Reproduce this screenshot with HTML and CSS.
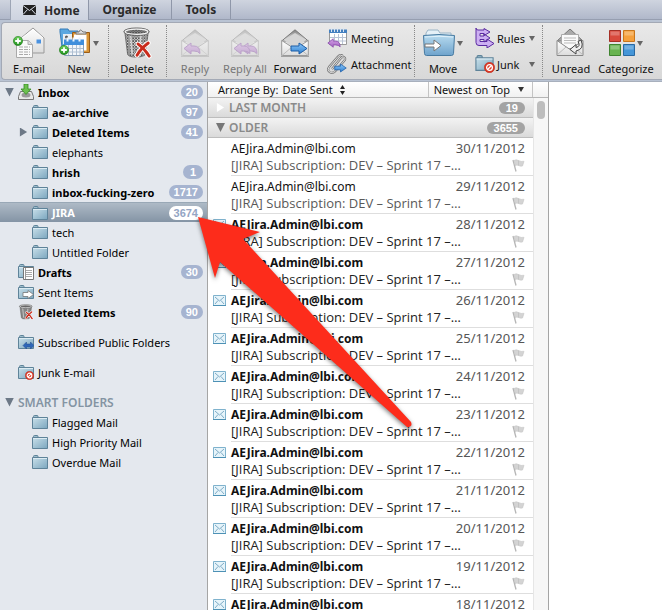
FILE: index.html
```html
<!DOCTYPE html>
<html lang="en">
<head>
<meta charset="utf-8">
<title>Mail</title>
<link rel="stylesheet" href="styles.css">
</head>
<body>
<svg class="defs" aria-hidden="true">
  <defs>
    <linearGradient id="g-folder" x1="0" y1="0" x2="1" y2="1"><stop offset="0" stop-color="#c9e0ea"/><stop offset="1" stop-color="#7ba6be"/></linearGradient>
    <linearGradient id="g-move" x1="0" y1="0" x2="0" y2="1"><stop offset="0" stop-color="#b9dcf0"/><stop offset="1" stop-color="#6fa3cc"/></linearGradient>
    <linearGradient id="g-paper" x1="0" y1="0" x2="0" y2="1"><stop offset="0" stop-color="#ffffff"/><stop offset="1" stop-color="#dcdcdc"/></linearGradient>
    <linearGradient id="g-blue" x1="0" y1="0" x2="0" y2="1"><stop offset="0" stop-color="#8cc8fa"/><stop offset="1" stop-color="#2f7fd0"/></linearGradient>
    <linearGradient id="g-purple" x1="0" y1="0" x2="0" y2="1"><stop offset="0" stop-color="#d9a6ea"/><stop offset="1" stop-color="#a062c0"/></linearGradient>
    <linearGradient id="g-lid" x1="0" y1="0" x2="0" y2="1"><stop offset="0" stop-color="#7e7e7e"/><stop offset="1" stop-color="#e8e8e8"/></linearGradient>
    <linearGradient id="g-green" x1="0" y1="0" x2="0" y2="1"><stop offset="0" stop-color="#6fd25c"/><stop offset="1" stop-color="#1f8f1c"/></linearGradient>
    <pattern id="mesh" width="3" height="3" patternUnits="userSpaceOnUse"><path d="M0 0L3 3M3 0L0 3" stroke="#4c4c4c" stroke-width=".9"/></pattern>
    <symbol id="folder" viewBox="0 0 16 14">
      <path d="M1.500 3.500V1.500q0-1 1-1h2.500q1 0 1 1V3.500" fill="#9dbdcc" stroke="#5e8399"/>
      <path d="M.5 2.500h15v11H.5z" fill="url(#g-folder)" stroke="#5e8399"/>
      <path d="M1 3.500h14" stroke="#dcebf2"/>
    </symbol>
    <symbol id="nosign" viewBox="0 0 10 10">
      <circle cx="5" cy="5" r="4.700" fill="#dc3a27" stroke="#b92b1c" stroke-width=".5"/>
      <circle cx="5" cy="5" r="2.600" fill="none" stroke="#fff" stroke-width="1.200"/><path d="M3.200 6.800L6.800 3.200" stroke="#fff" stroke-width="1.200"/>
    </symbol>
    <symbol id="plus" viewBox="0 0 10 10">
      <circle cx="5" cy="5" r="4.600" fill="url(#g-green)" stroke="#1c7a1a" stroke-width=".6"/><path d="M5 2.200v5.600M2.200 5h5.600" stroke="#fff" stroke-width="1.800"/>
    </symbol>
    <symbol id="bin" viewBox="0 0 32 34">
      <path d="M3 5L6 29q1 3 9 3t10-3l3-24z" fill="#d9d9d9" stroke="#777"/>
      <path d="M3 5L6 29q1 3 9 3t10-3l3-24z" fill="url(#mesh)"/>
      <path d="M9 9l2 20M20 9l-1 20" stroke="#f4f4f4" stroke-width="2" opacity=".6"/>
      <ellipse cx="15.500" cy="5" rx="13.500" ry="4" fill="#8e8e8e" stroke="#666"/>
      <ellipse cx="15.500" cy="5" rx="12" ry="2.800" fill="url(#mesh)" stroke="#f2f2f2" stroke-width="1.200"/>
      <path d="M17 18q7 5 12 13M28 17q-8 6-12 13" fill="none" stroke="#fff" stroke-width="5" stroke-linecap="round"/>
      <path d="M17 18q7 5 12 13M28 17q-8 6-12 13" fill="none" stroke="#c92c1c" stroke-width="3" stroke-linecap="round"/>
    </symbol>
    <symbol id="letter" viewBox="0 0 28 28">
      <path d="M.7 12L14 .8 27.300 12z" fill="url(#g-lid)" stroke="#777"/>
      <path d="M.7 11.500v15h26.600v-15L14 21.500z" fill="url(#g-paper)"/>
      <path d="M3 11L14 4l11 7-11 9z" fill="#d5d5d5"/>
      <path d="M.7 11.500v15h26.600v-15L14 20z" fill="url(#g-paper)" stroke="#999"/>
      <path d="M1 26.500L11 18M27 26.500L17 18" stroke="#bbb"/>
      <path d="M0 27.500h28" stroke="#666" opacity=".5"/>
    </symbol>
    <symbol id="arrow-right" viewBox="0 0 18 13"><path d="M1 4h8V1l8 5.500-8 5.500V9H1z" fill="url(#g-blue)" stroke="#1b5ca6" stroke-linejoin="round"/></symbol>
    <symbol id="arrow-back" viewBox="0 0 18 13"><path d="M1 6.500L8 1v3h3q6 0 6 7.500Q15 9 11 9H8v3z" fill="url(#g-purple)" stroke="#8547a8" stroke-linejoin="round"/></symbol>
    <symbol id="mail" viewBox="0 0 13 11">
      <path d="M.5.5h12v10H.5z" fill="#e6f4fa" stroke="#7fb2cd"/><path d="M0 10.500h13" stroke="#4d91b5"/>
      <path d="M2 2l4.500 4L11 2M2 9l3-3.500M11 9L8 5.500" fill="none" stroke="#7eabc6"/>
    </symbol>
    <symbol id="flag" viewBox="0 0 13 13">
      <path d="M1 1l3 11.500" stroke="#b5b5b5" stroke-width="1.300"/><path d="M2 1.500q2-1.500 4.500 0t5.500.800L10.500 7q-2 .5-4-.5t-3 .5z" fill="#d4d4d4" stroke="#c4c4c4" stroke-width=".6"/><path d="M6.500 1.500v5" stroke="#c4c4c4"/>
    </symbol>
  </defs>
</svg>

<div class="app">
  <header>
    <div class="tabs" role="tablist">
      <button class="tab active" role="tab" aria-selected="true"><svg width="13" height="10" viewBox="0 0 13 10"><path d="M0 0h13v10H0z" fill="#222"/><path d="M0 .5l6.500 5 6.500-5M0 9.500l4.500-5M13 9.500l-4.500-5" fill="none" stroke="#d8dce6"/></svg>Home</button>
      <button class="tab" role="tab">Organize</button>
      <button class="tab" role="tab">Tools</button>
    </div>
    <div class="ribbon">
      <div class="group">
        <button class="tool"><span class="pic"><svg width="32" height="32" viewBox="0 0 32 32">
          <path d="M8 11L20 1l11 10v15H8z" fill="url(#g-paper)" stroke="#999"/><path d="M9 11l11-8.500L30 11" fill="none" stroke="#fff"/><path d="M23.500 12.500h4.500v4h-4.500z" fill="#4b92e0"/>
          <path d="M3.500 13.500h12l4 4v13h-16z" fill="#fafafa" stroke="#aaa"/><path d="M6 20h11M6 22.500h11M6 25h11M6 27.500h11" stroke="#aaa" stroke-dasharray="4 1"/><path d="M15 13.500v4h4.500" fill="#ddd" stroke="#aaa"/>
          <use href="#plus" x="0" y="9" width="10" height="10"/></svg></span>E-mail</button>
        <button class="tool"><span class="pic"><svg width="32" height="32" viewBox="0 0 32 32">
          <path d="M1 5V2h8l1 2h9v23H4z" fill="#5aa7e0" stroke="#377db8"/><path d="M4 7h14v10H4z" fill="#e8eef3"/><circle cx="7.500" cy="10" r="1.500" fill="#555"/><path d="M5 15q2.500-5 5 0" fill="#555"/>
          <path d="M13.500 5.500h17v20h-17z" fill="#d99537" stroke="#9a5d18"/><path d="M15 7.500h12.500v16H15z" fill="#fff"/><path d="M17 7V5h3q1-4 4 0h3v2z" fill="#ddd" stroke="#777"/>
          <path d="M5.500 14.500h19v14h-19z" fill="#f4f7fb" stroke="#8aa0b8"/><path d="M5 12.500h20V18H5z" fill="#3f8edc"/><path d="M8.500 10.500v4M14.500 10.500v4M20.500 10.500v4" stroke="#e8f2fb" stroke-width="2"/><path d="M9.500 18v10M13.500 18v10M17.500 18v10M21 18v10M6 21.500h18M6 25h18" stroke="#aebfd2"/>
          <use href="#plus" x="0" y="18" width="10" height="10"/></svg><span class="caret"></span></span>New</button>
      </div>
      <div class="group">
        <button class="tool"><span class="pic"><svg width="32" height="32"><use href="#bin"/></svg></span>Delete</button>
      </div>
      <div class="group respond">
        <button class="tool" disabled><span class="pic"><svg width="28" height="28"><use href="#letter"/><use href="#arrow-back" x="2" y="13" width="18" height="13"/></svg></span>Reply</button>
        <button class="tool" disabled><span class="pic"><svg width="28" height="28"><use href="#letter"/><use href="#arrow-back" x="9" y="13" width="18" height="13"/><use href="#arrow-back" x="2" y="13" width="18" height="13"/></svg></span>Reply All</button>
        <button class="tool"><span class="pic"><svg width="28" height="28"><use href="#letter"/><use href="#arrow-right" x="9" y="13" width="18" height="13"/></svg></span>Forward</button>
        <div class="stack">
          <button class="mini"><svg width="20" height="20" viewBox="0 0 20 20">
            <path d="M2.500 2.500h17v14h-17z" fill="#fff" stroke="#999"/><path d="M2 1.500h18V5H2z" fill="#4480c0"/><path d="M4.500 0v4M7.500 0v4M10.500 0v4M13.500 0v4M16.500 0v4" stroke="#dbe6f2"/><path d="M7.500 6v10M11.500 6v10M15.500 6v10M3 9.500h16M3 13h16" stroke="#b8c3d4"/><use href="#arrow-back" x="0" y="10" width="14" height="10"/></svg>Meeting</button>
          <button class="mini"><svg width="20" height="20" viewBox="0 0 20 20">
            <path d="M5 15L14 4q2-2 3.500-.5T17 7L8 17.500q-3 2.500-5.500.5T2 13L11 2.500q2.500-2.500 5-.5" fill="none" stroke="#777" stroke-width="2.200"/><path d="M5 15L14 4q2-2 3.500-.5T17 7L8 17.500q-3 2.500-5.500.5T2 13L11 2.500q2.500-2.500 5-.5" fill="none" stroke="#ddd"/><use href="#arrow-right" x="7" y="9" width="13" height="10"/></svg>Attachment</button>
        </div>
      </div>
      <div class="group filing">
        <button class="tool"><span class="pic"><svg width="32" height="28" viewBox="0 0 32 28">
          <path d="M3 8V4l2-3h10l2 3h11v6z" fill="#e5f0f7" stroke="#9ab4c6"/><path d="M.5 6.500q15.500-2 31 0l-1 18q-.2 2-2 2H3.500q-1.800 0-2-2z" fill="url(#g-move)" stroke="#477aa1"/><path d="M2 8q14-1.500 28 0" fill="none" stroke="#e2f2fb"/>
          <path d="M2 15h9v-4l7 5.500-7 5.500v-4H2z" fill="#fff" stroke="#777" stroke-linejoin="round"/></svg><span class="caret"></span></span>Move</button>
        <div class="stack">
          <button class="mini"><svg width="20" height="20" viewBox="0 0 20 20">
            <path d="M1 0q0 2 2 2h6V.5L15 4 9 7.500V5.500H5V8h4V6l6 4-6 4V11.500H5v2h7V11l7 4.500-7 4.500v-2.500H4q-3 0-3-3z" fill="#cdb0f2" stroke="#5a2ba0" stroke-linejoin="round"/></svg>Rules<span class="caret"></span></button>
          <button class="mini"><svg width="20" height="18" viewBox="0 0 20 18"><use href="#folder" width="19" height="16"/><use href="#nosign" x="9" y="7" width="11" height="11"/></svg>Junk<span class="caret"></span></button>
        </div>
      </div>
      <div class="group">
        <button class="tool"><span class="pic"><svg width="30" height="28" viewBox="0 0 30 28">
          <path d="M1 12L14 0l13 12z" fill="#aaa" stroke="#777"/><path d="M5.500 5.500h17v14h-17z" fill="#fafafa" stroke="#aaa"/><path d="M8 9h12M8 11.500h12M8 14h12" stroke="#bbb"/><path d="M1 11.500l13 9 13-9v15H1z" fill="url(#g-paper)" stroke="#888"/><path d="M1 26l9-8M27 26l-9-8" stroke="#bbb"/>
          <path d="M25 11q4 9-5 11v3l-6-4.500 6-5v3q5-1 2-6z" fill="#eee" stroke="#444" stroke-linejoin="round"/></svg></span>Unread</button>
        <button class="tool wide"><span class="pic"><svg width="26" height="28" viewBox="0 0 26 28">
          <path d="M.5 1.500h11v11H.5z" fill="#d8493c" stroke="#a52f25"/><path d="M14.500 1.500h11v11h-11z" fill="#f5a03c" stroke="#c9761b"/><path d="M.5 15.500h11v11H.5z" fill="#67b34f" stroke="#3f8430"/><path d="M14.500 15.500h11v11h-11z" fill="#4596d8" stroke="#2869a3"/>
          <path d="M1.500 2.500h9v4h-9zM15.500 2.500h9v4h-9zM1.500 16.500h9v4h-9zM15.500 16.500h9v4h-9z" fill="#fff" opacity=".25"/></svg><span class="caret"></span></span>Categorize</button>
      </div>
    </div>
  </header>

  <main class="panes">
    <nav class="sidebar" aria-label="Folders">
      <a class="row strong" href="#"><span class="twist open"></span><svg width="16" height="16" viewBox="0 0 16 16"><path d="M2.500 7.500h11l2 5v3H.5v-3z" fill="#e8e8e8" stroke="#777"/><ellipse cx="8" cy="11" rx="4.500" ry="2.500" fill="#999"/><path d="M6 0h4v5h3L8 10.500 3 5h3z" fill="#6cc04e" stroke="#348a22" stroke-width=".8"/></svg><span class="name">Inbox</span><span class="count">20</span></a>
      <a class="row child strong" href="#"><span class="twist"></span><svg width="16" height="14"><use href="#folder"/></svg><span class="name">ae-archive</span><span class="count">97</span></a>
      <a class="row child strong" href="#"><span class="twist shut"></span><svg width="16" height="14"><use href="#folder"/></svg><span class="name">Deleted Items</span><span class="count">41</span></a>
      <a class="row child" href="#"><span class="twist"></span><svg width="16" height="14"><use href="#folder"/></svg><span class="name">elephants</span></a>
      <a class="row child strong" href="#"><span class="twist"></span><svg width="16" height="14"><use href="#folder"/></svg><span class="name">hrish</span><span class="count">1</span></a>
      <a class="row child strong" href="#"><span class="twist"></span><svg width="16" height="14"><use href="#folder"/></svg><span class="name">inbox-fucking-zero</span><span class="count">1717</span></a>
      <a class="row child strong selected" href="#" aria-current="true"><span class="twist"></span><svg width="16" height="14"><use href="#folder"/></svg><span class="name">JIRA</span><span class="count">3674</span></a>
      <a class="row child" href="#"><span class="twist"></span><svg width="16" height="14"><use href="#folder"/></svg><span class="name">tech</span></a>
      <a class="row child" href="#"><span class="twist"></span><svg width="16" height="14"><use href="#folder"/></svg><span class="name">Untitled Folder</span></a>
      <a class="row strong" href="#"><span class="twist"></span><svg width="16" height="16" viewBox="0 0 16 16"><use href="#folder" width="16" height="14"/><path d="M5.500 3.500h10v12h-10z" fill="#fff" stroke="#777"/><path d="M7 6.500h7M7 8.500h7M7 10.500h7M7 12.500h7" stroke="#aaa"/><path d="M7.500 4v11" stroke="#999"/></svg><span class="name">Drafts</span><span class="count">30</span></a>
      <a class="row" href="#"><span class="twist"></span><svg width="16" height="14" viewBox="0 0 16 14"><use href="#folder"/><path d="M5 7.500h5v-2l5.500 4-5.500 4v-2H5z" fill="#fff" stroke="#777" stroke-width=".8"/></svg><span class="name">Sent Items</span></a>
      <a class="row strong" href="#"><span class="twist"></span><svg width="16" height="16"><use href="#bin"/></svg><span class="name">Deleted Items</span><span class="count">90</span></a>
      <a class="row apart" href="#"><span class="twist"></span><svg width="16" height="15" viewBox="0 0 16 15"><use href="#folder" width="16" height="14"/><path d="M5 10.500l3.500-3.500v2h4V7l3.500 3.500-3.500 3.500v-2h-4v2z" fill="#2f67b8" stroke="#234d8c" stroke-width=".5"/></svg><span class="name">Subscribed Public Folders</span></a>
      <a class="row apart" href="#"><span class="twist"></span><svg width="16" height="15" viewBox="0 0 16 15"><use href="#folder" width="16" height="14"/><use href="#nosign" x="7" y="6" width="9" height="9"/></svg><span class="name">Junk E-mail</span></a>
      <button class="row apart heading" aria-expanded="true"><span class="twist open"></span><span class="name">SMART FOLDERS</span></button>
      <a class="row child" href="#"><span class="twist"></span><svg width="16" height="14"><use href="#folder"/></svg><span class="name">Flagged Mail</span></a>
      <a class="row child" href="#"><span class="twist"></span><svg width="16" height="14"><use href="#folder"/></svg><span class="name">High Priority Mail</span></a>
      <a class="row child" href="#"><span class="twist"></span><svg width="16" height="14"><use href="#folder"/></svg><span class="name">Overdue Mail</span></a>
    </nav>

    <section class="list" aria-label="Messages">
      <div class="sortbar">
        <label for="arrange">Arrange By:</label>
        <select id="arrange"><option>Date Sent</option></select>
        <svg width="5" height="10" viewBox="0 0 5 10"><path d="M0 4l2.500-4L5 4zM0 6l2.500 4L5 6z" fill="#222"/></svg>
        <button class="order">Newest on Top<span class="caret"></span></button>
      </div>
      <div class="scroller">
        <div class="messages">
          <button class="section" aria-expanded="false"><span class="twist shut"></span><span class="name">LAST MONTH</span><span class="count">19</span></button>
          <button class="section" aria-expanded="true"><span class="twist open"></span><span class="name">OLDER</span><span class="count">3655</span></button>
          <article class="message"><span class="state"></span><div class="body"><span class="from">AEJira.Admin@lbi.com</span><time>30/11/2012</time><span class="subject">[JIRA] Subscription: DEV – Sprint 17 –…</span><svg width="13" height="13"><use href="#flag"/></svg></div></article>
          <article class="message"><span class="state"></span><div class="body"><span class="from">AEJira.Admin@lbi.com</span><time>29/11/2012</time><span class="subject">[JIRA] Subscription: DEV – Sprint 17 –…</span><svg width="13" height="13"><use href="#flag"/></svg></div></article>
          <article class="message unread"><span class="state"><svg width="13" height="11"><use href="#mail"/></svg></span><div class="body"><span class="from">AEJira.Admin@lbi.com</span><time>28/11/2012</time><span class="subject">[JIRA] Subscription: DEV – Sprint 17 –…</span><svg width="13" height="13"><use href="#flag"/></svg></div></article>
          <article class="message unread"><span class="state"><svg width="13" height="11"><use href="#mail"/></svg></span><div class="body"><span class="from">AEJira.Admin@lbi.com</span><time>27/11/2012</time><span class="subject">[JIRA] Subscription: DEV – Sprint 17 –…</span><svg width="13" height="13"><use href="#flag"/></svg></div></article>
          <article class="message unread"><span class="state"><svg width="13" height="11"><use href="#mail"/></svg></span><div class="body"><span class="from">AEJira.Admin@lbi.com</span><time>26/11/2012</time><span class="subject">[JIRA] Subscription: DEV – Sprint 17 –…</span><svg width="13" height="13"><use href="#flag"/></svg></div></article>
          <article class="message unread"><span class="state"><svg width="13" height="11"><use href="#mail"/></svg></span><div class="body"><span class="from">AEJira.Admin@lbi.com</span><time>25/11/2012</time><span class="subject">[JIRA] Subscription: DEV – Sprint 17 –…</span><svg width="13" height="13"><use href="#flag"/></svg></div></article>
          <article class="message unread"><span class="state"><svg width="13" height="11"><use href="#mail"/></svg></span><div class="body"><span class="from">AEJira.Admin@lbi.com</span><time>24/11/2012</time><span class="subject">[JIRA] Subscription: DEV – Sprint 17 –…</span><svg width="13" height="13"><use href="#flag"/></svg></div></article>
          <article class="message unread"><span class="state"><svg width="13" height="11"><use href="#mail"/></svg></span><div class="body"><span class="from">AEJira.Admin@lbi.com</span><time>23/11/2012</time><span class="subject">[JIRA] Subscription: DEV – Sprint 17 –…</span><svg width="13" height="13"><use href="#flag"/></svg></div></article>
          <article class="message unread"><span class="state"><svg width="13" height="11"><use href="#mail"/></svg></span><div class="body"><span class="from">AEJira.Admin@lbi.com</span><time>22/11/2012</time><span class="subject">[JIRA] Subscription: DEV – Sprint 17 –…</span><svg width="13" height="13"><use href="#flag"/></svg></div></article>
          <article class="message unread"><span class="state"><svg width="13" height="11"><use href="#mail"/></svg></span><div class="body"><span class="from">AEJira.Admin@lbi.com</span><time>21/11/2012</time><span class="subject">[JIRA] Subscription: DEV – Sprint 17 –…</span><svg width="13" height="13"><use href="#flag"/></svg></div></article>
          <article class="message unread"><span class="state"><svg width="13" height="11"><use href="#mail"/></svg></span><div class="body"><span class="from">AEJira.Admin@lbi.com</span><time>20/11/2012</time><span class="subject">[JIRA] Subscription: DEV – Sprint 17 –…</span><svg width="13" height="13"><use href="#flag"/></svg></div></article>
          <article class="message unread"><span class="state"><svg width="13" height="11"><use href="#mail"/></svg></span><div class="body"><span class="from">AEJira.Admin@lbi.com</span><time>19/11/2012</time><span class="subject">[JIRA] Subscription: DEV – Sprint 17 –…</span><svg width="13" height="13"><use href="#flag"/></svg></div></article>
          <article class="message unread"><span class="state"><svg width="13" height="11"><use href="#mail"/></svg></span><div class="body"><span class="from">AEJira.Admin@lbi.com</span><time>18/11/2012</time></div></article>
        </div>
        <div class="track"><span class="thumb"></span></div>
      </div>
    </section>
    <section class="reader" aria-label="Reading pane"></section>
    <svg class="pointer" width="230" height="226" viewBox="0 0 230 226" aria-hidden="true"><path d="M8 7L70 22 53 29 221 212Q223 217 217 217L30 52l-5 16z" fill="#fd2c1b"/></svg>
  </main>
</div>
</body>
</html>
```
FILE: styles.css
```css
* { box-sizing: border-box; }

body {
  margin: 0;
  font-family: "Noto Sans", "Open Sans", sans-serif;
  font-size: 12px;
  color: #111;
}

button, select {
  margin: 0;
  padding: 0;
  border: 0;
  background: none;
  font: inherit;
  color: inherit;
}

a { color: inherit; text-decoration: none; }
svg { display: block; flex: none; }
.defs { position: absolute; width: 0; height: 0; }

.app {
  display: grid;
  grid-template-rows: auto 1fr;
  height: 100vh;
  overflow: hidden;
}

/* Tabs */
header { background: #b9c3d3; }

.tabs {
  display: flex;
  height: 20px;
  padding-left: 10px;
  background: linear-gradient(#cfd4df, #b0b8ca);
  border-bottom: 1px solid #969eb0;
}

.tab {
  display: flex;
  align-items: center;
  justify-content: center;
  gap: 8px;
  padding: 0 14px;
  font-weight: 700;
  color: #2b2b2b;
  border-right: 1px solid #8f97a9;
}

.tab.active {
  height: 20px;
  padding: 0 8px 0 12px;
  background: linear-gradient(#dde1ea, #cdd3e0);
  border-left: 1px solid #9da5b5;
}

/* Ribbon */
.ribbon {
  display: flex;
  height: 58px;
  margin: 2px 0 1px 1px;
  border: 1px solid #a3a9b5;
  border-right: 0;
  border-radius: 4px 0 0 4px;
  background: linear-gradient(#e9e9e9, #d8d8d8);
}

.group {
  display: flex;
  padding: 0 4px 0 3px;
  margin: 2px 0;
  border-left: 1px dotted #888;
}

.group:first-child { border-left: 0; padding-left: 2px; }

.tool {
  display: flex;
  flex-direction: column;
  align-items: center;
  width: 50px;
  line-height: 16px;
  white-space: nowrap;
  font-size: 11px;
}

.tool.wide { width: 60px; }
.tool:disabled { color: #777; }
.tool:disabled svg { opacity: 0.4; }

.pic {
  display: flex;
  align-items: center;
  gap: 2px;
  height: 36px;
}

.caret {
  flex: none;
  border: 3px solid transparent;
  border-top: 5px solid #666;
  border-bottom: 0;
}

.stack {
  display: flex;
  flex-direction: column;
  justify-content: space-around;
  padding-left: 7px;
}

.mini {
  display: flex;
  align-items: center;
  gap: 4px;
  height: 24px;
  font-size: 11px;
}

.mini .caret { margin-left: auto; }
.respond .stack { width: 90px; }
.filing .stack { width: 70px; padding-right: 3px; }
.filing .mini { gap: 2px; }

/* Panes */
.panes {
  position: relative;
  display: grid;
  grid-template-columns: 208px 341px 1fr;
  min-height: 0;
  overflow: hidden;
  background: #fff;
  border-top: 1px solid #a8b0bd;
}

.sidebar {
  overflow: hidden;
  background: #e4e8ee;
  border-right: 1px solid #a5a5a5;
}

.row {
  display: flex;
  align-items: center;
  gap: 4px;
  width: 100%;
  height: 20px;
  padding: 0 4px 0 5px;
  white-space: nowrap;
  text-align: left;
  color: #000;
  font-size: 11px;
}

.row.child { padding-left: 19px; }
.row.apart { margin-top: 10px; }
.row.strong { font-weight: 700; }
.row.heading { font-size: 12px; font-weight: 600; color: #8494a3; }

.row.selected {
  color: #fff;
  background: linear-gradient(#aebac6, #8494a5);
  border-top: 1px solid #99a8b6;
}

.name { flex: 1; }
.twist { flex: none; width: 9px; height: 9px; color: #6d7987; }
.twist.open { background: currentColor; clip-path: polygon(0 0, 100% 0, 50% 100%); }
.twist.shut { background: currentColor; clip-path: polygon(10% 0, 90% 50%, 10% 100%); }

.count {
  min-width: 20px;
  padding: 0 5px;
  border-radius: 7px;
  background: #a6b4d0;
  color: #fff;
  font: 700 11px/14px "Liberation Sans", sans-serif;
  text-align: center;
}

.selected .count { background: #fff; color: #94a5c4; }

/* Message list */
.list {
  display: flex;
  flex-direction: column;
  min-height: 0;
  border-right: 1px solid #a5a5a5;
}

.sortbar {
  display: flex;
  align-items: center;
  gap: 4px;
  height: 16px;
  padding: 0 15px 0 10px;
  background: linear-gradient(#fff, #f1f1f1);
  border-bottom: 1px solid #b5b5b5;
  font-size: 11px;
  line-height: 14px;
}

.sortbar select { appearance: none; margin-right: 3px; }

.order {
  display: flex;
  align-items: center;
  gap: 8px;
  height: 15px;
  margin-left: auto;
  padding: 0 8px 0 5px;
  border: solid #c4c4c4;
  border-width: 0 1px;
}

.order .caret { border-top-color: #333; }

.scroller {
  display: flex;
  flex: 1;
  min-height: 0;
}

.messages { flex: 1; min-width: 0; overflow: hidden; }

.section {
  display: flex;
  align-items: center;
  gap: 4px;
  width: 100%;
  height: 20px;
  padding: 0 8px;
  background: linear-gradient(#f3f3f3, #dadada);
  border-bottom: 1px solid #bdbdbd;
  font-size: 12px;
  font-weight: 600;
  text-align: left;
  color: #8a8a8a;
}

.section .twist.open { color: #777; }
.section .twist.shut { color: #fff; }
.section .count { padding: 0 7px; background: #a3a3a3; line-height: 12px; }

.message { display: flex; height: 38px; }
.state { flex: none; width: 23px; padding: 5px 0 0 5px; }

.body {
  display: grid;
  flex: 1;
  min-width: 0;
  grid-template-columns: minmax(0, 1fr) auto;
  grid-template-rows: 17px 17px;
  align-items: center;
  padding: 2px 8px 0 0;
  border-bottom: 1px solid #dedede;
  line-height: 17px;
  white-space: nowrap;
}

.body svg { justify-self: end; }
.body time { color: #555; font-size: 13px; }
.subject { color: #595959; font-family: "Open Sans", sans-serif; font-size: 13px; }
.unread .from { font-weight: 700; }
.unread .subject { color: #222; }

.track {
  flex: none;
  width: 15px;
  padding: 3px;
  background: #f7f7f7;
  border-left: 1px solid #e6e6e6;
}

.thumb {
  display: block;
  width: 8px;
  height: 18px;
  border-radius: 4px;
  background: #bdbdbd;
}

.pointer {
  position: absolute;
  left: 190px;
  top: 128px;
  filter: drop-shadow(0 2px 2px rgba(0, 0, 0, 0.5));
}
```
